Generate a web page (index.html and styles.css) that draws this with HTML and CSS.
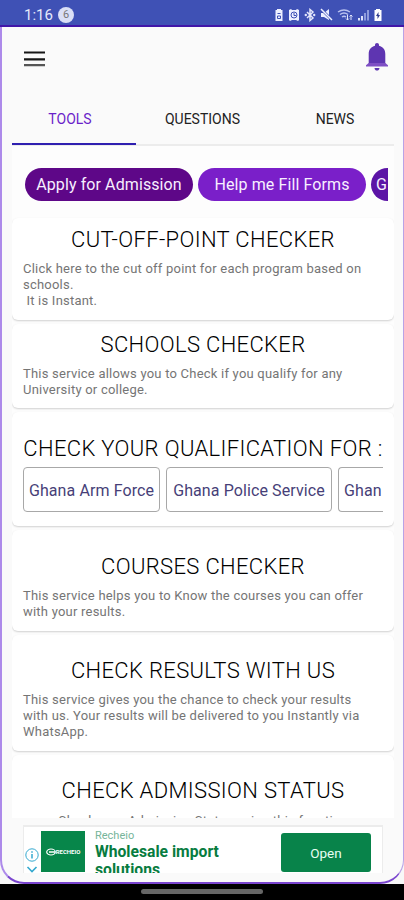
FILE: index.html
```html
<!DOCTYPE html>
<html lang="en">
<head>
    <meta charset="UTF-8">
    <meta name="viewport" content="width=device-width, initial-scale=1.0">
    <title>Admission Tools</title>
    <link rel="stylesheet" href="styles.css">
</head>
<body>
    <div class="status-bar">
        <span class="clock">1:16</span>
        <span class="notice">6</span>
        <div class="status-icons">
            <svg width="10" height="14" viewBox="0 0 10 14"><path fill="#eef0ff" d="M3 1h4v1h1.500v11h-7V2H3z"/><path stroke="#3f51b5" fill="none" d="M3.500 5.500h3M3.500 8v2.500h3V8z"/></svg>
            <svg width="12" height="14" viewBox="0 0 12 14"><path fill="#eef0ff" d="M1 2l2-1 1 1h4l1-1 2 1v10l-1 1-2-1H4l-2 1-1-1z"/><circle cx="6" cy="7" r="3" fill="none" stroke="#3f51b5"/><path d="M6 5v2.500h2" fill="none" stroke="#3f51b5"/></svg>
            <svg width="12" height="14" viewBox="0 0 12 14"><path d="M3 4l6 6-3 2.500v-11L9 4l-6 6" fill="none" stroke="#e3e6fb" stroke-width="1.500"/><circle cx="1.800" cy="7" r="1.200" fill="#e3e6fb"/><circle cx="10.200" cy="7" r="1.200" fill="#e3e6fb"/></svg>
            <svg width="13" height="14" viewBox="0 0 13 14"><path fill="#eef0ff" d="M1 5h3l5-4v11L4 9H1z"/><path d="M1 1l11 11" stroke="#3f51b5" stroke-width="2.500"/><path d="M1 1l11 11" stroke="#eef0ff" stroke-width="1.500"/></svg>
            <svg width="16" height="14" viewBox="0 0 16 14"><path d="M1 4q6-4 12 0M3 6.500q4-3 8 0M5 9q2-1.500 4 0" fill="none" stroke="#b9c2ef" stroke-width="1.500"/><path d="M10.500 12V7M9 10.500l1.500 1.500 1.500-1.500M14 7v5M12.500 8.500L14 7l1.500 1.500" fill="none" stroke="#dfe3fa"/></svg>
            <svg width="12" height="14" viewBox="0 0 12 14"><path d="M1 12.500V10h2v2.500zM4 12.500V8h2v4.500z" fill="#dfe3fa"/><path d="M7 12.500V5h2v7.500zM10 12.500V2h2v10.500z" fill="#8f9cdc"/></svg>
            <svg width="10" height="14" viewBox="0 0 10 14"><path fill="#fff" d="M3 1h4v1h1.500v11h-7V2H3z"/><path fill="#2d3a8c" d="M5.500 4L3 8h1.500v3L7 7H5.500z"/></svg>
        </div>
    </div>

    <div class="screen">
        <header class="toolbar">
            <svg class="menu-icon" width="22" height="16" viewBox="0 0 22 16"><path d="M0 1.500h21M0 8.300h21" stroke="#161616" stroke-width="2.200"/><path d="M0 14.200h21" stroke="#555" stroke-width="2.200"/></svg>
            <svg class="bell-icon" width="22" height="28" viewBox="0 0 22 28"><path fill="#5e35b1" d="M11 0c1.200 0 2 .8 2 2v.7c4.200 1 6.300 4.100 6.300 8.300V21H2.700V11c0-4.200 2.100-7.300 6.300-8.300V2c0-1.200.8-2 2-2z"/><path fill="#7e4fc4" d="M2.700 20h16.600l2.700 2.200V23.500H0V22.200z"/><path fill="#5e35b1" d="M8.500 25h5c-.3 1.800-1.200 2.600-2.500 2.600S8.800 26.800 8.500 25z"/></svg>
        </header>

        <nav class="tabs">
            <div class="tab active">TOOLS</div>
            <div class="tab">QUESTIONS</div>
            <div class="tab">NEWS</div>
        </nav>

        <main class="content">
            <div class="chips">
                <span class="chip dark">Apply for Admission</span>
                <span class="chip">Help me Fill Forms</span>
                <span class="chip last">G</span>
            </div>

            <section class="card first">
                <h2>CUT-OFF-POINT CHECKER</h2>
                <p>Click here to the cut off point for each program based on schools.<br>&nbsp;It is Instant.</p>
            </section>
            <section class="card second">
                <h2>SCHOOLS CHECKER</h2>
                <p>This service allows you to Check if you qualify for any University or college.</p>
            </section>
            <section class="card qualification">
                <h2>CHECK YOUR QUALIFICATION FOR :</h2>
                <div class="options">
                    <span class="option">Ghana Arm Force</span>
                    <span class="option wide">Ghana Police Service</span>
                    <span class="option open">Ghan</span>
                </div>
            </section>
            <section class="card courses">
                <h2>COURSES CHECKER</h2>
                <p>This service helps you to Know the courses you can offer with your results.</p>
            </section>
            <section class="card">
                <h2>CHECK RESULTS WITH US</h2>
                <p>This service gives you the chance to check your results<br>with us. Your results will be delivered to you Instantly via WhatsApp.</p>
            </section>
            <section class="card admission">
                <h2>CHECK ADMISSION STATUS</h2>
                <p>Check your Admission Status using this function</p>
            </section>
        </main>

        <aside class="ad">
            <div class="ad-marks">
                <svg width="14" height="14" viewBox="0 0 14 14"><circle cx="7" cy="7" r="6.200" fill="none" stroke="#35a9cf"/><path d="M7 6v4.500M7 3.300v1.500" stroke="#35a9cf" stroke-width="1.500"/></svg>
                <svg width="12" height="7" viewBox="0 0 12 7"><path d="M1.500 1L6 5.500 10.500 1" fill="none" stroke="#35a9cf" stroke-width="1.600"/></svg>
            </div>
            <div class="ad-logo">
                <svg width="10" height="8" viewBox="0 0 10 8"><ellipse cx="5" cy="4" rx="4.300" ry="3" fill="none" stroke="#fff" stroke-width="1.200"/><path d="M3 4h6" stroke="#fff" stroke-width="1.500"/></svg>
                <span>RECHEIO</span>
            </div>
            <div class="ad-text">
                <div class="ad-brand">Recheio</div>
                <div class="ad-title">Wholesale import solutions</div>
            </div>
            <div class="ad-button">Open</div>
        </aside>
    </div>

    <div class="nav-bar"><div class="handle"></div></div>
</body>
</html>
```
FILE: styles.css
```css
* {
    box-sizing: border-box;
}
body {
    margin: 0;
    height: 900px;
    overflow: hidden;
    display: flex;
    flex-direction: column;
    font-family: Roboto, sans-serif;
    background-color: #f8f8f8;
}
svg {
    display: block;
    flex-shrink: 0;
}
.status-bar {
    height: 27px;
    flex-shrink: 0;
    display: flex;
    align-items: center;
    padding: 4px 21px 0 24px;
    background-color: #3f51b5;
    border-bottom: 2px solid #4116a8;
    color: #e6e9fb;
}
.clock {
    font-size: 15px;
    width: 34px;
}
.notice {
    width: 16px;
    height: 16px;
    border-radius: 50%;
    background-color: #dadff6;
    color: #777;
    font-size: 11px;
    line-height: 16px;
    text-align: center;
}
.status-icons {
    display: flex;
    gap: 4px;
    margin-left: auto;
}
.screen {
    height: 857px;
    flex-shrink: 0;
    display: flex;
    flex-direction: column;
    overflow: hidden;
    background-color: #fafafa;
    border-left: 2px solid #ad8aea;
    border-right: 1px solid #b9a2e6;
    border-bottom: 2px solid #7a45cf;
    border-radius: 0 0 24px 24px;
}
.toolbar {
    height: 64px;
    flex-shrink: 0;
    display: flex;
    justify-content: space-between;
    padding: 16px 15px 0 22px;
}
.menu-icon {
    margin-top: 8px;
}
.tabs {
    height: 55px;
    flex-shrink: 0;
    display: flex;
    margin: 0 9px 0 10px;
    border-bottom: 2px solid #ececec;
}
.tab {
    width: 124px;
    height: 54px;
    flex-shrink: 0;
    padding-left: 9px;
    color: #222;
    font-size: 14px;
    line-height: 56px;
    text-align: center;
}
.tab.active {
    padding: 0 8px 0 0;
    color: #6a1fc9;
    border-bottom: 2px solid #2f1fb0;
}
.tab:last-child {
    flex: 1;
    padding-left: 16px;
}
.content {
    height: 672px;
    flex-shrink: 0;
    overflow: hidden;
    margin: 0 9px 0 10px;
    background-color: #fdfdfd;
}
.chips {
    display: flex;
    gap: 5px;
    height: 72px;
    padding-top: 22px;
    margin: 0 6px 0 13px;
    overflow: hidden;
}
.chip {
    width: 168px;
    height: 33px;
    flex-shrink: 0;
    border-radius: 17px;
    background-color: #7a1fc9;
    color: #f7efff;
    font-size: 16px;
    line-height: 34px;
    letter-spacing: 0.1px;
    text-align: center;
    white-space: nowrap;
}
.chip.dark {
    background-color: #5e0788;
}
.chip.last {
    width: 17px;
    padding-left: 5px;
    border-radius: 17px 0 0 17px;
    text-align: left;
    background-color: #5c14a6;
}
.card {
    margin-bottom: 4px;
    padding: 23px 11px 11px;
    background-color: #fff;
    border-radius: 6px;
    box-shadow: 0 1px 2px rgba(0,0,0,0.18);
}
.card h2 {
    margin: 0 0 8px;
    color: #000;
    font-size: 22px;
    font-weight: 300;
    line-height: 26px;
    letter-spacing: 0.35px;
    text-align: center;
    white-space: nowrap;
}
.card p {
    margin: 0;
    color: #757575;
    font-size: 13px;
    line-height: 16px;
    letter-spacing: 0.22px;
}
.card.first {
    padding: 9px 11px 11px;
}
.card.second {
    padding: 8px 11px 10px;
}
.card.qualification {
    padding: 24px 11px 14px;
}
.card.qualification h2 {
    margin-bottom: 5px;
}
.card.courses {
    padding-top: 24px;
}
.card.admission h2 {
    margin-bottom: 9px;
}
.card.admission p {
    text-align: center;
}
.options {
    display: flex;
    gap: 6px;
}
.option {
    width: 137px;
    height: 45px;
    flex-shrink: 0;
    border: 1px solid #a8a8a8;
    border-radius: 4px;
    color: #473f78;
    font-size: 16px;
    line-height: 46px;
    letter-spacing: 0.1px;
    text-align: center;
    white-space: nowrap;
}
.option.wide {
    width: 166px;
}
.option.open {
    width: 45px;
    padding-left: 5px;
    border-right: 0;
    border-radius: 4px 0 0 4px;
    text-align: left;
}
.ad {
    height: 48px;
    flex-shrink: 0;
    display: flex;
    margin: 7px 20px 0 21px;
    overflow: hidden;
    background-color: #fff;
    border: 1px solid #ececec;
    border-top-width: 2px;
    border-bottom: 0;
}
.ad-marks {
    width: 17px;
    padding: 21px 0 0 1px;
}
.ad-marks svg + svg {
    margin: 4px 0 0 1px;
}
.ad-logo {
    width: 44px;
    height: 41px;
    margin-top: 4px;
    display: flex;
    align-items: center;
    justify-content: center;
    background-color: #07864a;
    color: #fff;
    font-size: 6px;
    font-weight: bold;
}
.ad-text {
    width: 160px;
    margin-left: 10px;
}
.ad-brand {
    margin-top: 2px;
    color: #76b59a;
    font-size: 11px;
    line-height: 14px;
}
.ad-title {
    color: #087c3f;
    font-size: 15.700px;
    font-weight: bold;
    line-height: 18px;
}
.ad-button {
    width: 90px;
    height: 39px;
    margin: 6px 11px 0 auto;
    border-radius: 3px;
    background-color: #08834a;
    color: #e9fff3;
    font-size: 13.500px;
    line-height: 41px;
    text-align: center;
}
.nav-bar {
    height: 16px;
    flex-shrink: 0;
    display: flex;
    justify-content: center;
    padding-top: 5px;
    background-color: #000;
}
.handle {
    width: 122px;
    height: 5px;
    border-radius: 3px;
    background-color: #666;
}
```
